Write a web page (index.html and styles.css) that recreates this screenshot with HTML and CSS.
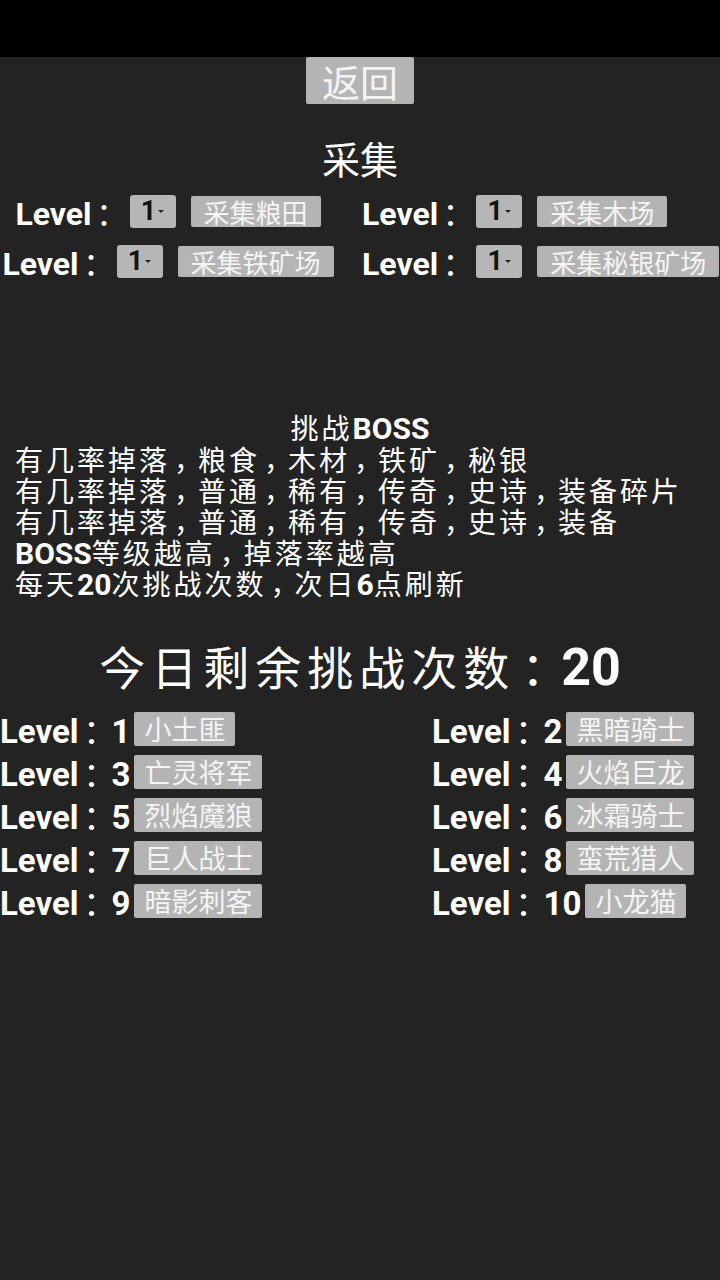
FILE: index.html
```html
<!DOCTYPE html>
<html lang="zh-CN">
<head>
  <meta charset="UTF-8">
  <meta name="viewport" content="width=device-width, initial-scale=1.0">
  <title>采集与挑战BOSS</title>
  <link rel="stylesheet" href="styles.css">
</head>
<body>
  <div class="status-bar"></div>

  <div class="back-row">
    <button class="back-btn">返回</button>
  </div>

  <h2 class="gather-title">采集</h2>

  <div class="gather">
    <div class="gather-row">
      <div class="gather-left">
        <span class="g-label">Level<span class="pn">：</span></span>
        <span class="pick">1<i class="caret"></i></span>
        <button class="g-btn">采集粮田</button>
      </div>
      <div class="gather-right">
        <span class="g-label">Level<span class="pn">：</span></span>
        <span class="pick">1<i class="caret"></i></span>
        <button class="g-btn">采集木场</button>
      </div>
    </div>
    <div class="gather-row">
      <div class="gather-left">
        <span class="g-label">Level<span class="pn">：</span></span>
        <span class="pick">1<i class="caret"></i></span>
        <button class="g-btn">采集铁矿场</button>
      </div>
      <div class="gather-right">
        <span class="g-label">Level<span class="pn">：</span></span>
        <span class="pick">1<i class="caret"></i></span>
        <button class="g-btn">采集秘银矿场</button>
      </div>
    </div>
  </div>

  <div class="boss-info">
    <div class="boss-title">挑战<b>BOSS</b></div>
    <p>有几率掉落<span class="pn">，</span>粮食<span class="pn">，</span>木材<span class="pn">，</span>铁矿<span class="pn">，</span>秘银</p>
    <p>有几率掉落<span class="pn">，</span>普通<span class="pn">，</span>稀有<span class="pn">，</span>传奇<span class="pn">，</span>史诗<span class="pn">，</span>装备碎片</p>
    <p>有几率掉落<span class="pn">，</span>普通<span class="pn">，</span>稀有<span class="pn">，</span>传奇<span class="pn">，</span>史诗<span class="pn">，</span>装备</p>
    <p><b>BOSS</b>等级越高<span class="pn">，</span>掉落率越高</p>
    <p>每天<b>20</b>次挑战次数<span class="pn">，</span>次日<b>6</b>点刷新</p>
  </div>

  <h1 class="times-left">今日剩余挑战次数<span class="pn">：</span><b>20</b></h1>

  <div class="boss-list" id="bossList"></div>

  <script>
    const bosses = ['小土匪', '黑暗骑士', '亡灵将军', '火焰巨龙', '烈焰魔狼',
                    '冰霜骑士', '巨人战士', '蛮荒猎人', '暗影刺客', '小龙猫'];

    const list = document.getElementById('bossList');
    list.innerHTML = bosses.map((name, i) =>
      `<div class="boss-item">
        <span class="lv">Level<span class="pn">：</span>${i + 1}</span>
        <button class="b-btn">${name}</button>
      </div>`
    ).join('');
  </script>
</body>
</html>
```

FILE: styles.css
```css
html, body {
  overflow-x: hidden;
}
body {
  margin: 0;
  background-color: #232323;
  color: #ffffff;
  font-family: Roboto, "Noto Sans CJK SC", sans-serif;
  min-height: 1280px;
}
.status-bar {
  height: 57px;
  background-color: #000;
}
button {
  font-family: "Noto Sans CJK SC", sans-serif;
  border: none;
  color: #f4f4f4;
  background-color: #b4b4b4;
  cursor: pointer;
  padding: 0;
}
/* half-width punctuation glyph, padded back to a full cell so it sits in the middle */
.pn {
  font-family: "Noto Sans CJK SC", sans-serif;
  font-feature-settings: "halt";
  font-weight: normal;
  letter-spacing: 0;
  padding: 0 0.36em 0 0.14em;
}
.back-row {
  display: flex;
  justify-content: center;
}
.back-btn {
  height: 47px;
  padding: 0 16px;
  font-size: 38px;
  line-height: 47px;
  border-radius: 2px;
}
.gather-title {
  margin: 34px 0 0;
  text-align: center;
  font-family: "Noto Sans CJK SC", sans-serif;
  font-weight: normal;
  font-size: 38px;
  line-height: 40px;
}
.gather {
  margin-top: 8px;
}
.gather-row {
  display: flex;
  height: 50px;
  align-items: center;
}
.gather-left, .gather-right {
  display: flex;
  align-items: center;
}
.gather-left {
  width: 336px;
  justify-content: center;
}
.gather-right {
  padding-left: 26px;
  flex-shrink: 0;
}
.g-label {
  font-size: 32px;
  font-weight: bold;
  white-space: nowrap;
}
.pick {
  display: flex;
  align-items: center;
  justify-content: center;
  width: 46px;
  height: 33px;
  margin-left: 6px;
  background-color: #b6b6b6;
  border-radius: 3px;
  color: #111;
  font-size: 27px;
  font-weight: bold;
}
.caret {
  display: inline-block;
  width: 0;
  height: 0;
  margin-left: 2px;
  border-left: 3px solid transparent;
  border-right: 3px solid transparent;
  border-top: 3px solid #222;
}
.g-btn {
  height: 31px;
  margin-left: 15px;
  padding: 0 13px;
  font-size: 26px;
  line-height: 31px;
  border-radius: 2px;
  white-space: nowrap;
}
.boss-info {
  margin-top: 127px;
  padding-left: 15px;
  font-size: 28px;
  letter-spacing: 3px;
  line-height: 31px;
}
.boss-info b {
  font-size: 30px;
  letter-spacing: 0;
}
.boss-info p, .boss-title {
  height: 31px;
  margin: 0;
  white-space: nowrap;
}
.boss-title {
  text-align: center;
  margin-left: -15px;
}
.times-left {
  margin: 36px 0 0;
  height: 60px;
  text-align: center;
  font-weight: normal;
  font-size: 46px;
  letter-spacing: 6px;
  line-height: 60px;
}
.times-left b {
  font-size: 52px;
  letter-spacing: 0;
}
.boss-list {
  display: grid;
  grid-template-columns: 432px 1fr;
  margin-top: 12px;
}
.boss-item {
  display: flex;
  align-items: center;
  gap: 4px;
  height: 43px;
}
.lv {
  font-size: 33px;
  font-weight: bold;
  white-space: nowrap;
}
.b-btn {
  height: 34px;
  padding: 0 10px;
  font-size: 27px;
  line-height: 34px;
  border-radius: 2px;
  white-space: nowrap;
}
```
